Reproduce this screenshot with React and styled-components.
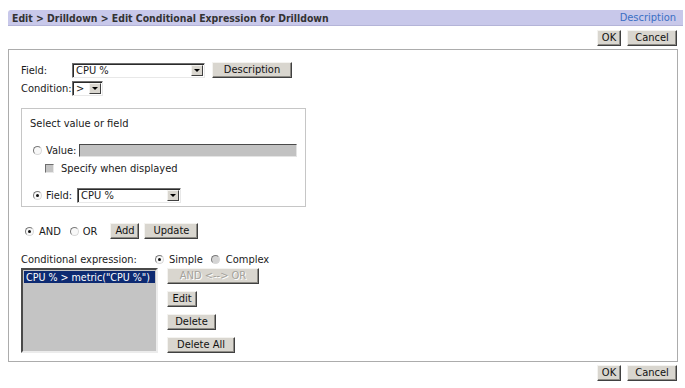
import React from 'react';
import styled, { createGlobalStyle, css } from 'styled-components';

const FONT = '"DejaVu Sans Condensed", "Liberation Sans", sans-serif';

const GlobalStyle = createGlobalStyle`
  html, body { margin: 0; padding: 0; background: #fff; }
  body { font-family: ${FONT}; font-size: 11px; color: #1a1a1a; }
`;

const Page = styled.div`
  width: 685px;
  height: 388px;
  box-sizing: border-box;
  padding: 10px 2px 0 8px;
`;

const Header = styled.div`
  width: 675px;
  height: 16px;
  box-sizing: border-box;
  display: flex;
  align-items: center;
  justify-content: space-between;
  padding: 0 7px 0 4px;
  background: #c8c8ea;
  border-top-left-radius: 3px;
  border-bottom: 1px solid #b4b4d8;
`;

const Title = styled.span`
  font-weight: bold;
  font-size: 10.4px;
  color: #333;
`;

const HelpLink = styled.a`
  color: #3a6fc4;
  text-decoration: none;
`;

const ActionBar = styled.div`
  width: 670px;
  display: flex;
  justify-content: flex-end;
  gap: 6px;
  padding-right: 1px;
  box-sizing: border-box;
  margin-top: ${p => p.$top}px;
`;

const Button = styled.button`
  height: 16px;
  width: ${p => p.$w}px;
  padding: 0;
  box-sizing: border-box;
  font-family: ${FONT};
  font-size: 11px;
  line-height: 12px;
  color: ${p => (p.disabled ? '#a4a29c' : '#111')};
  text-shadow: ${p => (p.disabled ? '1px 1px 0 #fff' : 'none')};
  background: #d9d6cf;
  border: 1px solid;
  border-color: #f4f3f0 #404040 #404040 #f4f3f0;
  box-shadow: inset -1px -1px 0 #8e8c86;
  cursor: default;
`;

const Panel = styled.div`
  width: 670px;
  height: 313px;
  box-sizing: border-box;
  margin-top: 3px;
  border: 1px solid #acacac;
  padding: 12px 0 0 12px;
`;

const FieldGrid = styled.div`
  display: grid;
  grid-template-columns: 51px auto;
  row-gap: 3px;
  align-items: center;
`;

const Line = styled.div`
  display: flex;
  align-items: center;
  gap: ${p => p.$gap || 0}px;
  margin-top: ${p => p.$top || 0}px;
  padding-left: ${p => p.$indent || 0}px;
`;

const Text = styled.span`
  flex: none;
  margin-left: ${p => p.$ml || 0}px;
  margin-right: ${p => p.$mr || 0}px;
`;

const SelectBox = styled.div`
  width: ${p => p.$w}px;
  height: 15px;
  box-sizing: border-box;
  display: flex;
  align-items: stretch;
  background: #fff;
  border: 1px solid;
  border-color: #6e6e6e #e8e8e8 #e8e8e8 #6e6e6e;
  box-shadow: inset 1px 1px 0 #2a2a2a;
`;

const SelectText = styled.span`
  flex: 1;
  padding: 1px 0 0 3px;
  line-height: 12px;
  white-space: nowrap;
`;

const SelectArrow = styled.span`
  width: 12px;
  margin: 1px 1px 1px 0;
  box-sizing: border-box;
  background: #d9d6cf;
  border: 1px solid;
  border-color: #f4f3f0 #404040 #404040 #f4f3f0;
  display: flex;
  align-items: center;
  justify-content: center;
  &::after {
    content: '';
    border-left: 3px solid transparent;
    border-right: 3px solid transparent;
    border-top: 3px solid #000;
  }
`;

const Select = ({ w, value }) => (
  <SelectBox $w={w}>
    <SelectText>{value}</SelectText>
    <SelectArrow />
  </SelectBox>
);

const InnerBox = styled.div`
  width: 285px;
  height: 99px;
  box-sizing: border-box;
  margin-top: 12px;
  border: 1px solid #c6c6c6;
  padding: 8px 0 0 8px;
`;

const Caption = styled.div`
  line-height: 13px;
`;

const Radio = styled.span`
  position: relative;
  flex: none;
  width: 9px;
  height: 9px;
  box-sizing: border-box;
  margin-left: ${p => p.$ml || 0}px;
  border-radius: 50%;
  border: 1px solid;
  border-color: #7a7a7a #d8d8d8 #d8d8d8 #7a7a7a;
  background: ${p => (p.$dim ? '#d4d4d4' : '#f8f8f8')};
  ${p =>
    p.$checked &&
    css`
      &::after {
        content: '';
        position: absolute;
        left: 2px;
        top: 2px;
        width: 3px;
        height: 3px;
        border-radius: 50%;
        background: #111;
      }
    `}
`;

const Check = styled.span`
  flex: none;
  width: 9px;
  height: 9px;
  box-sizing: border-box;
  background: #c4c4c4;
  border: 1px solid;
  border-color: #6e6e6e #e8e8e8 #e8e8e8 #6e6e6e;
`;

const TextInput = styled.div`
  width: ${p => p.$w}px;
  height: 13px;
  box-sizing: border-box;
  background: #c2c2c2;
  border: 1px solid;
  border-color: #4a4a4a #e4e4e4 #e4e4e4 #4a4a4a;
`;

const ExprLabel = styled.span`
  width: 134px;
  flex: none;
`;

const ListBox = styled.div`
  width: 137px;
  height: 85px;
  box-sizing: border-box;
  background: #c4c4c4;
  border: 2px solid;
  border-color: #4a4a4a #ececec #ececec #4a4a4a;
  padding: 1px;
`;

const ListItem = styled.div`
  height: 12px;
  line-height: 12px;
  padding-left: 2px;
  font-size: 10.6px;
  white-space: nowrap;
  overflow: hidden;
  color: ${p => (p.$selected ? '#fff' : '#000')};
  background: ${p => (p.$selected ? '#0d2a72' : 'transparent')};
`;

const ButtonColumn = styled.div`
  display: flex;
  flex-direction: column;
  align-items: flex-start;
  gap: 7px;
`;

const ListRow = styled.div`
  display: flex;
  gap: 9px;
  margin-top: 2px;
`;

export default function App() {
  return (
    <Page>
      <GlobalStyle />
      <Header>
        <Title>Edit &gt; Drilldown &gt; Edit Conditional Expression for Drilldown</Title>
        <HelpLink href="#">Description</HelpLink>
      </Header>
      <ActionBar $top={4}>
        <Button $w={24}>OK</Button>
        <Button $w={50}>Cancel</Button>
      </ActionBar>

      <Panel>
        <FieldGrid>
          <Text>Field:</Text>
          <Line $gap={7}>
            <Select w={133} value="CPU %" />
            <Button $w={80}>Description</Button>
          </Line>
          <Text>Condition:</Text>
          <Select w={31} value=">" />
        </FieldGrid>

        <InnerBox>
          <Caption>Select value or field</Caption>
          <Line $top={14} $indent={3}>
            <Radio />
            <Text $ml={4} $mr={3}>Value:</Text>
            <TextInput $w={218} />
          </Line>
          <Line $top={5} $indent={15} $gap={7}>
            <Check />
            <Text>Specify when displayed</Text>
          </Line>
          <Line $top={13} $indent={3}>
            <Radio $checked />
            <Text $ml={4} $mr={5}>Field:</Text>
            <Select w={104} value="CPU %" />
          </Line>
        </InnerBox>

        <Line $top={16} $indent={4}>
          <Radio $checked />
          <Text $ml={5}>AND</Text>
          <Radio $ml={9} />
          <Text $ml={4} $mr={13}>OR</Text>
          <Line $gap={5}>
            <Button $w={29}>Add</Button>
            <Button $w={54}>Update</Button>
          </Line>
        </Line>

        <Line $top={14}>
          <ExprLabel>Conditional expression:</ExprLabel>
          <Radio $checked />
          <Text $ml={5}>Simple</Text>
          <Radio $ml={8} $dim />
          <Text $ml={6}>Complex</Text>
        </Line>
        <ListRow>
          <ListBox>
            <ListItem $selected>CPU % &gt; metric("CPU %")</ListItem>
          </ListBox>
          <ButtonColumn>
            <Button $w={92} disabled>AND &lt;--&gt; OR</Button>
            <Button $w={30}>Edit</Button>
            <Button $w={49}>Delete</Button>
            <Button $w={68}>Delete All</Button>
          </ButtonColumn>
        </ListRow>
      </Panel>

      <ActionBar $top={3}>
        <Button $w={24}>OK</Button>
        <Button $w={50}>Cancel</Button>
      </ActionBar>
    </Page>
  );
}
